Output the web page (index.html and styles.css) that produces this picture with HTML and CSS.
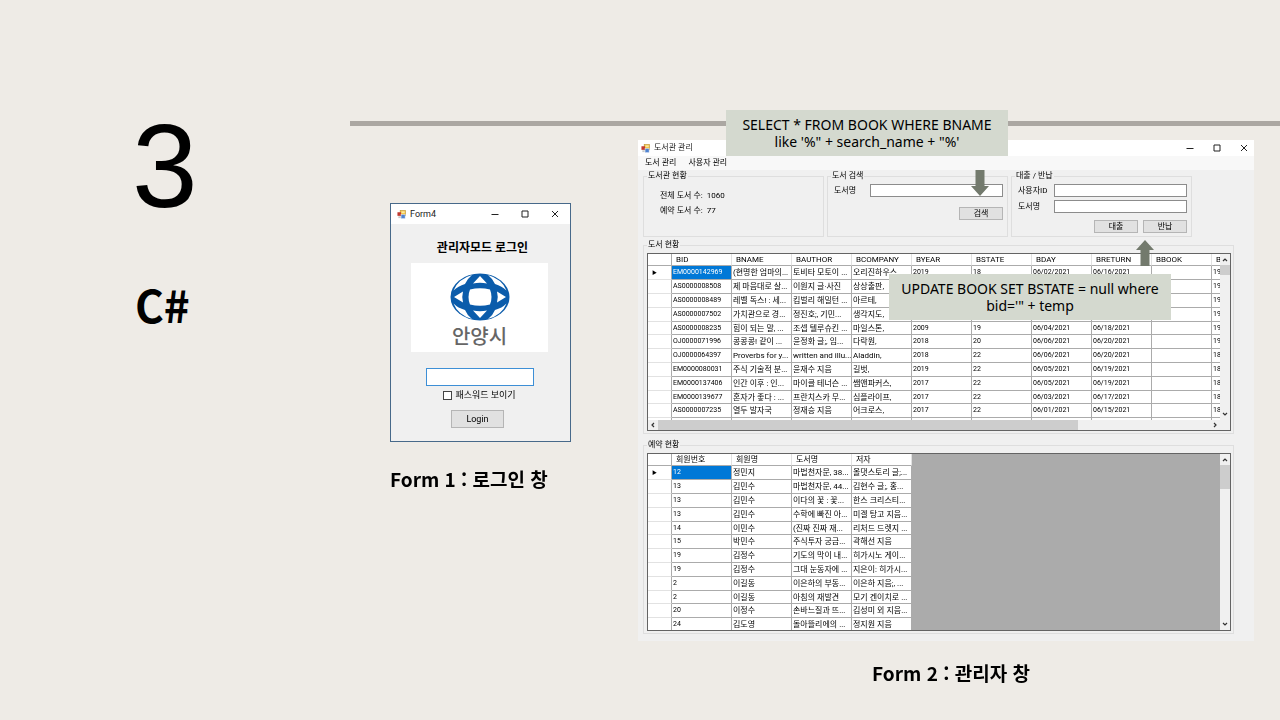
FILE: index.html
```html
<!DOCTYPE html>
<html lang="ko">
<head>
<meta charset="utf-8">
<title>C# 도서관 관리</title>
<link rel="stylesheet" href="styles.css">
</head>
<body>
<svg class="defs" aria-hidden="true">
  <symbol id="app" viewBox="0 0 10 10">
    <rect x="3.5" y="0.5" width="6" height="6" fill="#f5c542" stroke="#b58a2a" stroke-width=".6"/>
    <rect x="0.5" y="2.5" width="4" height="4" fill="#c0392f"/>
    <rect x="4.5" y="5" width="4.5" height="4.5" fill="#4f83d0" stroke="#dfe8f6" stroke-width=".6"/>
    <rect x="5" y="1.5" width="3.5" height="2" fill="#fbe6a2"/>
    <rect x="1.5" y="7" width="2.5" height="2" fill="#c9c9c9"/>
  </symbol>
  <symbol id="min" viewBox="0 0 8 8"><path d="M.5 4.5h7" stroke="#222" fill="none"/></symbol>
  <symbol id="max" viewBox="0 0 8 8"><path d="M1 1h6v6H1z" stroke="#222" fill="none"/></symbol>
  <symbol id="close" viewBox="0 0 8 8"><path d="M1 1l6 6M7 1L1 7" stroke="#222" fill="none"/></symbol>
  <symbol id="chev" viewBox="0 0 6 6"><path d="M1 4l2-2 2 2" stroke="#333" stroke-width="1.2" fill="none"/></symbol>
</svg>
<div class="slide">
  <header class="side">
    <p class="number">3</p>
    <h1 class="topic">C#</h1>
  </header>
  <main class="main">
    <div class="rule"></div>
    <div class="forms">
      <figure class="login-figure">
        <section class="login">
          <div class="titlebar tall">
            <svg class="app-icon"><use href="#app"/></svg><span class="title">Form4</span>
            <button class="win" aria-label="최소화"><svg><use href="#min"/></svg></button>
            <button class="win" aria-label="최대화"><svg><use href="#max"/></svg></button>
            <button class="win" aria-label="닫기"><svg><use href="#close"/></svg></button>
          </div>
          <form class="login-body">
            <h2 class="login-heading">관리자모드 로그인</h2>
            <div class="logo">
              <svg class="emblem" viewBox="0 0 60 48" role="img" aria-label="안양시">
                <ellipse cx="30" cy="24" rx="29.500" ry="23.500" fill="#0b5cab"/>
                <g fill="#fff">
                  <path d="M20 16.500Q30 14 40 16.500Q43 24 40 31.500Q30 34 20 31.500Q17 24 20 16.500Z"/>
                  <path d="M30 3L37 10.500Q30 9 23 10.500ZM30 45L37 37.500Q30 39 23 37.500Z"/>
                  <path d="M4 24L13 18.500Q11.500 24 13 29.500ZM56 24L47 18.500Q48.500 24 47 29.500Z"/>
                  <path id="gap" d="M3.500 17.500Q8 6 22 2Q17 6 15 11Q8 13 3.500 17.500Z"/>
                  <use href="#gap" transform="matrix(-1 0 0 1 60 0)"/>
                  <use href="#gap" transform="matrix(1 0 0 -1 0 48)"/>
                  <use href="#gap" transform="matrix(-1 0 0 -1 60 48)"/>
                </g>
              </svg>
              <span class="city">안양시</span>
            </div>
            <input class="password" type="text" aria-label="비밀번호" autofocus>
            <label class="show"><input type="checkbox" class="check">패스워드 보이기</label>
            <button type="button" class="btn login-btn">Login</button>
          </form>
        </section>
        <figcaption class="caption">Form 1 : 로그인 창</figcaption>
      </figure>

      <figure class="admin-figure">
        <section class="admin">
          <div class="titlebar">
            <svg class="app-icon"><use href="#app"/></svg><span class="title">도서관 관리</span>
            <button class="win" aria-label="최소화"><svg><use href="#min"/></svg></button>
            <button class="win" aria-label="최대화"><svg><use href="#max"/></svg></button>
            <button class="win" aria-label="닫기"><svg><use href="#close"/></svg></button>
          </div>
          <nav class="menu"><button>도서 관리</button><button>사용자 관리</button></nav>
          <div class="admin-body">
            <div class="groups">
              <fieldset class="group"><legend>도서관 현황</legend>
                <div class="stats"><p>전체 도서 수:&nbsp; 1060</p><p>예약 도서 수:&nbsp; 77</p></div>
              </fieldset>
              <fieldset class="group"><legend>도서 검색</legend>
                <div class="fields">
                  <div class="field"><label for="q">도서명</label><input id="q" type="text"></div>
                  <div class="actions single"><button class="btn">검색</button></div>
                </div>
              </fieldset>
              <fieldset class="group"><legend>대출 / 반납</legend>
                <div class="fields">
                  <div class="field"><label for="uid">사용자ID</label><input id="uid" type="text"></div>
                  <div class="field"><label for="book">도서명</label><input id="book" type="text"></div>
                  <div class="actions"><button class="btn">대출</button><button class="btn">반납</button></div>
                </div>
              </fieldset>
            </div>

            <fieldset class="group data"><legend>도서 현황</legend>
              <div class="sheet both">
                <div class="view">
                  <table class="books">
                    <colgroup><col class="head-col"><col span="9" class="col"><col class="col"></colgroup>
                    <thead><tr><th></th><th>BID</th><th>BNAME</th><th>BAUTHOR</th><th>BCOMPANY</th><th>BYEAR</th><th>BSTATE</th><th>BDAY</th><th>BRETURN</th><th>BBOOK</th><th>BID</th></tr></thead>
                    <tbody>
                      <tr><th class="mark">▶</th><td class="sel">EM0000142969</td><td>(현명한 엄마의...</td><td>토비타 모토이 ...</td><td>오리진하우스</td><td>2019</td><td>18</td><td>06/02/2021</td><td>06/16/2021</td><td></td><td>19</td></tr>
                      <tr><th></th><td>AS0000008508</td><td>제 마음대로 살...</td><td>이원지 글·사진</td><td>상상출판,</td><td></td><td></td><td></td><td></td><td></td><td>19</td></tr>
                      <tr><th></th><td>AS0000008489</td><td>레벨 독스! : 세...</td><td>킴벌리 해밀턴 ...</td><td>아르테,</td><td></td><td></td><td></td><td></td><td></td><td>19</td></tr>
                      <tr><th></th><td>AS0000007502</td><td>가치관으로 경...</td><td>정진호;, 기민...</td><td>생각지도,</td><td></td><td></td><td></td><td></td><td></td><td>19</td></tr>
                      <tr><th></th><td>AS0000008235</td><td>힘이 되는 말, ...</td><td>조셉 텔루슈킨 ...</td><td>마일스톤,</td><td>2009</td><td>19</td><td>06/04/2021</td><td>06/18/2021</td><td></td><td>19</td></tr>
                      <tr><th></th><td>OJ0000071996</td><td>콩콩콩! 같이 ...</td><td>윤정화 글;, 임...</td><td>다락원,</td><td>2018</td><td>20</td><td>06/06/2021</td><td>06/20/2021</td><td></td><td>19</td></tr>
                      <tr><th></th><td>OJ0000064397</td><td>Proverbs for y...</td><td>written and illu...</td><td>Aladdin,</td><td>2018</td><td>22</td><td>06/06/2021</td><td>06/20/2021</td><td></td><td>18</td></tr>
                      <tr><th></th><td>EM0000080031</td><td>주식 기술적 분...</td><td>윤재수 지음</td><td>길벗,</td><td>2019</td><td>22</td><td>06/05/2021</td><td>06/19/2021</td><td></td><td>18</td></tr>
                      <tr><th></th><td>EM0000137406</td><td>인간 이후 : 인...</td><td>마이클 테너슨 ...</td><td>쌤앤파커스,</td><td>2017</td><td>22</td><td>06/05/2021</td><td>06/19/2021</td><td></td><td>18</td></tr>
                      <tr><th></th><td>EM0000139677</td><td>혼자가 좋다 : ...</td><td>프란치스카 무...</td><td>심플라이프,</td><td>2017</td><td>22</td><td>06/03/2021</td><td>06/17/2021</td><td></td><td>18</td></tr>
                      <tr><th></th><td>AS0000007235</td><td>열두 발자국</td><td>정재승 지음</td><td>어크로스,</td><td>2017</td><td>22</td><td>06/01/2021</td><td>06/15/2021</td><td></td><td>18</td></tr>
                      <tr><th></th><td></td><td></td><td></td><td></td><td></td><td></td><td></td><td></td><td></td><td></td></tr>
                    </tbody>
                  </table>
                </div>
                <div class="vbar"><svg><use href="#chev"/></svg><i class="thumb short"></i><svg class="down"><use href="#chev"/></svg></div>
                <div class="hbar"><svg class="left"><use href="#chev"/></svg><i class="thumb wide"></i><svg class="right"><use href="#chev"/></svg></div>
              </div>
            </fieldset>

            <fieldset class="group data"><legend>예약 현황</legend>
              <div class="sheet">
                <div class="view">
                  <table class="holds">
                    <colgroup><col class="head-col"><col span="4" class="col"></colgroup>
                    <thead><tr><th></th><th>회원번호</th><th>회원명</th><th>도서명</th><th>저자</th></tr></thead>
                    <tbody>
                      <tr><th class="mark">▶</th><td class="sel">12</td><td>정민지</td><td>마법천자문, 38...</td><td>올댓스토리 글;...</td></tr>
                      <tr><th></th><td>13</td><td>김민수</td><td>마법천자문, 44...</td><td>김현수 글;, 홍...</td></tr>
                      <tr><th></th><td>13</td><td>김민수</td><td>이다의 꽃 : 꽃...</td><td>한스 크리스티...</td></tr>
                      <tr><th></th><td>13</td><td>김민수</td><td>수학에 빠진 아...</td><td>미겔 탕고 지음...</td></tr>
                      <tr><th></th><td>14</td><td>이민수</td><td>(진짜 진짜 재...</td><td>리처드 드렛지 ...</td></tr>
                      <tr><th></th><td>15</td><td>박민수</td><td>주식투자 궁금...</td><td>곽해선 지음</td></tr>
                      <tr><th></th><td>19</td><td>김정수</td><td>기도의 막이 내...</td><td>히가시노 게이...</td></tr>
                      <tr><th></th><td>19</td><td>김정수</td><td>그대 눈동자에 ...</td><td>지은이: 히가시...</td></tr>
                      <tr><th></th><td>2</td><td>이길동</td><td>이은하의 부동...</td><td>이은하 지음;, ...</td></tr>
                      <tr><th></th><td>2</td><td>이길동</td><td>아침의 재발견</td><td>모기 겐이치로 ...</td></tr>
                      <tr><th></th><td>20</td><td>이정수</td><td>손바느질과 뜨...</td><td>김성미 외 지음...</td></tr>
                      <tr><th></th><td>24</td><td>김도영</td><td>돌아뜰리에의 ...</td><td>정지원 지음</td></tr>
                    </tbody>
                  </table>
                </div>
                <div class="vbar"><svg><use href="#chev"/></svg><i class="thumb"></i><svg class="down"><use href="#chev"/></svg></div>
              </div>
            </fieldset>
          </div>
          <p class="callout select-note">SELECT * FROM BOOK WHERE BNAME<br>like '%" + search_name + "%'</p>
          <svg class="arrow arrow-down" viewBox="0 0 18 26"><path d="M4.500 0h9v16H18L9 26 0 16h4.500z"/></svg>
          <p class="callout update-note">UPDATE BOOK SET BSTATE = null where<br>bid='" + temp</p>
          <svg class="arrow arrow-up" viewBox="0 0 18 26"><path d="M4.500 26h9V10H18L9 0 0 10h4.500z"/></svg>
        </section>
        <figcaption class="caption centered">Form 2 : 관리자 창</figcaption>
      </figure>
    </div>
  </main>
</div>
</body>
</html>
```
FILE: styles.css
```css
* { box-sizing: border-box; }
body {
  margin: 0;
  background: #eeebe6;
  color: #000;
  font-family: "Liberation Sans", "Noto Sans CJK KR", sans-serif;
}
p, h1, h2, figure { margin: 0; }
button, input { font: inherit; color: inherit; }
svg { display: block; }
.defs { position: absolute; width: 0; height: 0; }

.slide { display: flex; min-height: 100vh; }
.side { flex: 0 0 350px; padding: 106px 0 0 132px; }
.number { font-size: 118px; line-height: 120px; }
.topic {
  margin-top: 50px;
  padding-left: 3px;
  font: bold 44px/56px "Noto Sans CJK KR", sans-serif;
}
.main { flex: 1; min-width: 0; padding-top: 121px; }
.rule { height: 5px; background: #aba7a2; }
.forms { display: flex; align-items: flex-start; padding: 14px 26px 0 40px; }
.login-figure { flex: 0 0 181px; margin: 63px 67px 0 0; }
.admin-figure { flex: 1; min-width: 0; }
.caption {
  margin-top: 23px;
  white-space: nowrap;
  font: bold 19px/28px "Noto Sans CJK KR", sans-serif;
}
.caption.centered { margin-top: 18px; padding-left: 10px; text-align: center; }

/* window frames */
.titlebar {
  display: flex;
  align-items: center;
  height: 16px;
  padding-left: 3px;
  background: #fff;
  font: 8px/12px Roboto, "Noto Sans CJK KR", sans-serif;
  color: #222;
}
.titlebar.tall { height: 20px; padding-left: 6px; font-size: 9px; }
.app-icon { width: 9px; height: 9px; margin-right: 4px; }
.title { flex: 1; }
.win {
  display: flex;
  justify-content: center;
  width: 21px;
  margin-left: 6px;
  padding: 0;
  border: 0;
  background: none;
}
.tall .win { width: 30px; margin-left: 0; }
.win svg { width: 8px; height: 8px; }
.btn {
  padding: 0;
  border: 1px solid #b5b5b5;
  background: #e1e1e1;
  text-align: center;
}

.login { border: 1px solid #47698a; background: #f0f0f0; }
.login-body {
  display: flex;
  flex-direction: column;
  align-items: center;
  padding: 16px 22px 13px 20px;
  font: 9px/12px Roboto, "Noto Sans CJK KR", sans-serif;
}
.login-heading { padding-left: 6px; font-size: 12px; line-height: 16px; }
.logo {
  display: flex;
  flex-direction: column;
  align-items: center;
  align-self: stretch;
  margin: 7px 0 16px;
  padding: 10px 0 4px;
  background: #fff;
}
.emblem { width: 60px; height: 48px; }
.city { margin-top: 5px; font-size: 20px; line-height: 22px; color: #666; font-weight: 500; }
.password { width: 108px; height: 18px; padding: 0 2px; border: 1px solid #3d8fd6; outline: 0; background: #fff; }
.show { display: flex; align-items: center; gap: 3px; margin: 3px 0 9px; }
.check { appearance: none; width: 9px; height: 9px; margin: 0; border: 1px solid #444; background: #fff; }
.login-btn { width: 53px; height: 18px; margin-right: 4px; }

.admin {
  position: relative;
  background: #f0f0f0;
  font: 8px/12px Roboto, "Noto Sans CJK KR", sans-serif;
}
.menu { display: flex; gap: 12px; height: 14px; padding-left: 7px; background: #f8f8f8; }
.menu button { padding: 0; border: 0; background: none; }
.admin-body { padding: 0 20px 7px 5px; }
.groups { display: grid; grid-template-columns: repeat(3, 181px); gap: 3px; }
.group { min-width: 0; margin: 0; padding: 0; border: 1px solid #dedede; }
.group legend { margin-left: 3px; padding: 0 1px; line-height: 12px; }
.stats { padding: 6px 0 18px 16px; line-height: 15px; }
.fields { padding: 2px 4px 0 6px; }
.field { display: flex; align-items: center; justify-content: space-between; margin-bottom: 3px; }
.field input { width: 133px; height: 13px; padding: 0 2px; border: 1px solid #8c8c8c; background: #fff; }
.actions { display: flex; justify-content: flex-end; gap: 5px; padding-top: 4px; }
.actions.single { padding-top: 7px; }
.actions .btn { width: 44px; height: 13px; line-height: 11px; }
.groups + .group { margin-top: 2px; }
.group + .group.data { margin-top: 5px; }
.data { padding: 2px 2px 2px 3px; }
.group.data legend { margin-left: 0; }

/* data grids */
.sheet {
  display: grid;
  grid-template: minmax(0, 1fr) / minmax(0, 1fr) 10px;
  height: 178px;
  border: 1px solid #646464;
  background: #ababab;
}
.sheet.both { grid-template-rows: minmax(0, 1fr) 10px; background: #fff; }
.view { overflow: hidden; }
.view table { border-collapse: separate; border-spacing: 0; table-layout: fixed; }
.books { width: 624px; }
.holds { width: 264px; }
.head-col { width: 24px; }
.col { width: 60px; }
.view tr { height: 14px; }
.view thead tr { height: 12px; }
.view tbody tr:nth-child(5n) { height: 13px; }
.view th, .view td {
  overflow: hidden;
  padding: 0 0 0 1px;
  border-right: 1px solid #ababab;
  border-bottom: 1px solid #ababab;
  background: #fff;
  font-weight: normal;
  line-height: 11px;
  text-align: left;
  white-space: nowrap;
}
.view th { border-color: #e2e2e2; }
.view tr th:first-child { border-right-color: #ababab; }
.view thead th { padding-left: 4px; border-bottom-color: #ababab; }
.books td:nth-child(2), .books td:nth-child(n+6), .holds td:nth-child(2) { font-size: 7px; }
.view .mark { padding-left: 4px; font-size: 5px; }
.view .sel { background: #0078d7; color: #fff; }
.vbar, .hbar { display: flex; align-items: center; background: #f0f0f0; }
.vbar { flex-direction: column; padding: 3px 0; }
.vbar svg, .hbar svg { flex: none; width: 6px; height: 6px; }
.hbar { grid-column: 1 / -1; padding: 0 12px 0 2px; }
.thumb { width: 10px; height: 24px; margin-top: 2px; background: #cdcdcd; }
.thumb.short { height: 10px; }
.thumb.wide { width: 74%; height: 10px; margin: 0 0 0 2px; }
.down { margin-top: auto; transform: rotate(180deg); }
.left { transform: rotate(-90deg); }
.right { margin-left: auto; transform: rotate(90deg); }

/* notes laid over the window */
.callout {
  position: absolute;
  width: 282px;
  padding: 6px 0;
  background: #d4d9cf;
  font: 14px/17px "Noto Sans", sans-serif;
  text-align: center;
  white-space: nowrap;
}
.select-note { top: -30px; left: 88px; }
.update-note { top: 134px; left: 251px; }
.arrow { position: absolute; width: 18px; height: 26px; fill: #737a6d; }
.arrow-down { top: 30px; left: 333px; }
.arrow-up { top: 100px; left: 498px; }
```
